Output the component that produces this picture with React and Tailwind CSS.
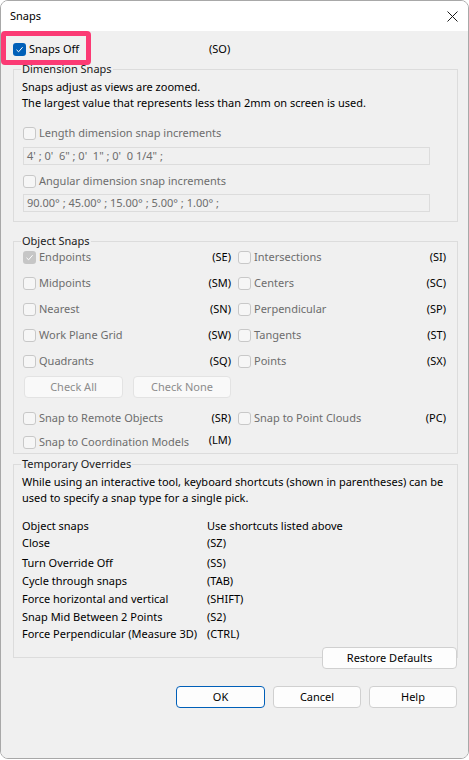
import React from "react";

const FONT = "font-['Noto_Sans','Open_Sans',sans-serif] text-[11px] leading-[16px]";

function Box({ checked, disabled }) {
  if (checked && !disabled) {
    return (
      <div className="w-[13px] h-[13px] rounded-[3px] bg-[#005fb8] flex items-center justify-center shrink-0">
        <svg width="9" height="9" viewBox="0 0 9 9" fill="none">
          <path d="M1.5 4.8 L3.6 6.8 L7.6 2.2" stroke="#fff" strokeWidth="1" />
        </svg>
      </div>
    );
  }
  if (checked) {
    return (
      <div className="w-[13px] h-[13px] rounded-[3px] bg-[#c6c6c6] flex items-center justify-center shrink-0">
        <svg width="9" height="9" viewBox="0 0 9 9" fill="none">
          <path d="M1.5 4.8 L3.6 6.8 L7.6 2.2" stroke="#fff" strokeWidth="1" />
        </svg>
      </div>
    );
  }
  return <div className="w-[13px] h-[13px] rounded-[3px] border border-[#c8c8c8] bg-[#f6f6f6] shrink-0" />;
}

function Check({ label, checked, disabled = true }) {
  return (
    <div className="flex items-center h-[20px]">
      <Box checked={checked} disabled={disabled} />
      <span className={"ml-[3px] " + (disabled ? "text-[#6d6d6d]" : "text-black")}>{label}</span>
    </div>
  );
}

function SnapCell({ label, code, checked }) {
  return (
    <div className="flex items-center justify-between h-[20px] w-[208px]">
      <Check label={label} checked={checked} />
      <span className="text-black">{code}</span>
    </div>
  );
}

function Group({ title, className, children }) {
  return (
    <div className={"relative border border-[#dcdcdc] " + className}>
      <span className="absolute -top-[9px] left-[7px] px-[1px] bg-[#f0f0f0] text-[#1a1a1a] leading-[16px]">{title}</span>
      {children}
    </div>
  );
}

function Btn({ children, className = "", primary, disabled }) {
  return (
    <button
      className={
        "h-[22px] rounded-[4px] border flex items-center justify-center " +
        (primary
          ? "border-[#005fb8] bg-[#fdfdfd] text-black "
          : disabled
          ? "border-[#e3e3e3] bg-[#f9f9f9] text-[#8c8c8c] "
          : "border-[#d0d0d0] bg-[#fdfdfd] text-black ") +
        className
      }
    >
      {children}
    </button>
  );
}

const snapRows = [
  ["Endpoints", "(SE)", "Intersections", "(SI)", true],
  ["Midpoints", "(SM)", "Centers", "(SC)"],
  ["Nearest", "(SN)", "Perpendicular", "(SP)"],
  ["Work Plane Grid", "(SW)", "Tangents", "(ST)"],
  ["Quadrants", "(SQ)", "Points", "(SX)"],
];

const overrides = [
  ["Close", "(SZ)", "mt-[1px]"],
  ["Turn Override Off", "(SS)", "mt-[4px]"],
  ["Cycle through snaps", "(TAB)", "mt-[2px]"],
  ["Force horizontal and vertical", "(SHIFT)", "mt-[2px]"],
  ["Snap Mid Between 2 Points", "(S2)", "mt-[2px]"],
  ["Force Perpendicular (Measure 3D)", "(CTRL)", "mt-[1px]"],
];

export default function App() {
  return (
    <div className={"w-[469px] h-[760px] bg-white relative " + FONT}>
      <div className="w-[469px] h-[759px] border border-[#a8a8a8] rounded-t-[8px] rounded-b-[8px] overflow-hidden flex flex-col">
        {/* title bar */}
        <div className="h-[30px] bg-white flex items-center justify-between pl-[9px] pr-[9px] shrink-0">
          <span className="text-black">Snaps</span>
          <svg width="11" height="11" viewBox="0 0 11 11" className="mr-[1px]">
            <path d="M0.5 0.5 L10.5 10.5 M10.5 0.5 L0.5 10.5" stroke="#1a1a1a" strokeWidth="1" />
          </svg>
        </div>

        {/* body */}
        <div className="flex-1 bg-[#f0f0f0] pl-[12px] pr-[10px] pt-[8px]">
          <div className="flex items-center h-[20px]">
            <div className="w-[196px]">
              <Check label="Snaps Off" checked disabled={false} />
            </div>
            <span className="text-black">(SO)</span>
          </div>

          {/* Dimension Snaps */}
          <Group title="Dimension Snaps" className="mt-[10px] pl-[9px] pr-[27px] pt-[9px] pb-[9px]">
            <div className="text-black -ml-[1px]">Snaps adjust as views are zoomed.</div>
            <div className="text-black -ml-[1px]">The largest value that represents less than 2mm on screen is used.</div>
            <div className="mt-[12px]">
              <Check label="Length dimension snap increments" />
            </div>
            <div className="mt-[4px] h-[18px] border border-[#dcdcdc] flex items-center pl-[3px] text-[#6d6d6d] whitespace-pre">
              {"4' ; 0'  6\" ; 0'  1\" ; 0'  0 1/4\" ;"}
            </div>
            <div className="mt-[6px]">
              <Check label="Angular dimension snap increments" />
            </div>
            <div className="mt-[3px] h-[18px] border border-[#dcdcdc] flex items-center pl-[3px] text-[#6d6d6d] whitespace-pre">
              {"90.00° ; 45.00° ; 15.00° ; 5.00° ; 1.00° ;"}
            </div>
          </Group>

          {/* Object Snaps */}
          <Group title="Object Snaps" className="mt-[19px] pl-[9px] pr-[10px] pt-[5px] pb-[1px]">
            <div className="flex flex-col gap-[6px]">
              {snapRows.map(([a, ac, b, bc, chk]) => (
                <div key={a} className="flex gap-[7px]">
                  <SnapCell label={a} code={ac} checked={chk} />
                  <SnapCell label={b} code={bc} />
                </div>
              ))}
            </div>
            <div className="flex gap-[10px] mt-[5px] ml-[1px]">
              <Btn disabled className="w-[99px]">Check All</Btn>
              <Btn disabled className="w-[98px]">Check None</Btn>
            </div>
            <div className="flex gap-[7px] mt-[10px]">
              <SnapCell label="Snap to Remote Objects" code="(SR)" />
              <SnapCell label="Snap to Point Clouds" code="(PC)" />
            </div>
            <div className="flex gap-[7px] mt-[4px]">
              <div className="flex items-center justify-between h-[20px] w-[208px]">
                <Check label="Snap to Coordination Models" />
                <span className="text-black -mt-[4px]">(LM)</span>
              </div>
            </div>
          </Group>

          {/* Temporary Overrides */}
          <Group title="Temporary Overrides" className="mt-[10px] pl-[9px] pr-[10px] pt-[9px] pb-[15px]">
            <div className="text-black -ml-[1px]">
              While using an interactive tool, keyboard shortcuts (shown in parentheses) can be
            </div>
            <div className="text-black -ml-[1px]">used to specify a snap type for a single pick.</div>
            <div className="mt-[12px] flex text-black -ml-[1px]">
              <span className="w-[185px]">Object snaps</span>
              <span>Use shortcuts listed above</span>
            </div>
            {overrides.map(([l, c, m]) => (
              <div key={l} className={"flex text-black -ml-[1px] " + m}>
                <span className="w-[185px]">{l}</span>
                <span>{c}</span>
              </div>
            ))}
          </Group>

          <div className="flex justify-end -mt-[11px] relative pr-[1px]">
            <Btn className="w-[135px]">Restore Defaults</Btn>
          </div>

          <div className="flex justify-end gap-[8px] mt-[17px] pr-[1px]">
            <Btn primary className="w-[89px]">OK</Btn>
            <Btn className="w-[88px]">Cancel</Btn>
            <Btn className="w-[88px]">Help</Btn>
          </div>
        </div>
      </div>

      {/* highlight annotation */}
      <div className="absolute left-[1px] top-[31px] w-[90px] h-[34px] border-[5px] border-[#fb3a74] rounded-[4px]" />
    </div>
  );
}
